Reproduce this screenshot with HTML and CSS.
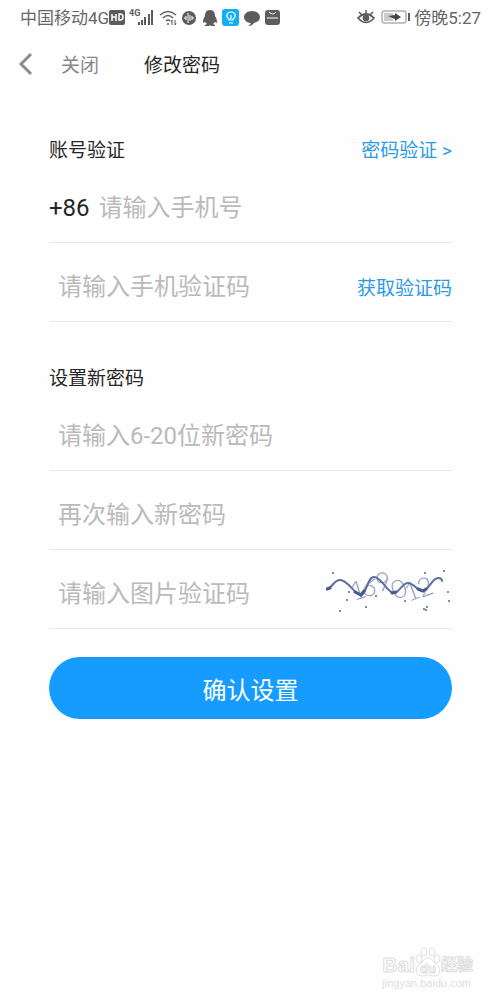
FILE: index.html
```html
<!DOCTYPE html>
<html lang="zh-CN">
<head>
  <meta charset="UTF-8">
  <meta name="viewport" content="width=device-width, initial-scale=1.0">
  <title>修改密码</title>
  <link rel="stylesheet" href="styles.css">
</head>
<body>
  <div class="status-bar">
    <div class="status-left">
      <span>中国移动4G</span>
      <svg width="174" height="22" viewBox="2 0 174 22" fill="#5c5c5c" aria-hidden="true">
        <!-- HD -->
        <rect x="2" y="4" width="16" height="15" rx="2"/>
        <path d="M5 8v7M9 8v7M5 11h4M12 8v6h1q3 0 3-3t-3-3z" fill="none" stroke="#fff" stroke-width="1.5"/>
        <!-- signal -->
        <text class="net-type" x="22" y="10">4G</text>
        <path d="M31 16h2v3h-2zM34 14h2v5h-2zM37 11h2v8h-2zM41 8h2v11h-2zM44 4h2v15h-2z"/>
        <!-- wifi -->
        <g fill="none" stroke="#5c5c5c" stroke-width="1.5">
          <path d="M53 9q8-7 16 0M56 12q5-5 10 0M59 15q2-2 4 0"/>
          <path d="M65 19v-5l-1 2M68 14v5l1-2" stroke-width="1"/>
        </g>
        <circle cx="61" cy="18" r="1"/>
        <!-- voice -->
        <circle cx="82" cy="12" r="7"/>
        <path d="M77 12h2M87 12h-2M79 10v4M81 7v10M83 9v6M85 10v4" stroke="#fff"/>
        <!-- penguin -->
        <path d="M103 4c-4 0-5 3-5 6-2 3-2 5-2 7l2-1 2 2-2 1v1h4l1-1 1 1h4v-1l-2-1 2-2 2 1c0-2 0-4-2-7 0-3-1-6-5-6z"/>
        <!-- bulb app -->
        <rect x="115" y="3" width="17" height="17" rx="3" fill="#12aef5"/>
        <path d="M122 14v-1c-4-3-2-7 2-7s6 4 2 7v1zM122 17h4M124 13v-4" fill="none" stroke="#fff" stroke-width="1.2"/>
        <!-- chat -->
        <path d="M145 5c-5 0-8 3-8 6s3 6 7 6q-1 2-3 3 4 0 6-3c4-1 6-3 6-6s-3-6-8-6z"/>
        <!-- store -->
        <rect x="158" y="4" width="15" height="15" rx="3"/>
        <path d="M162 6q4 4 7 0M160 12h11" fill="none" stroke="#fff"/>
      </svg>
    </div>
    <div class="status-right">
      <svg width="54" height="22" viewBox="-1 0 54 22" fill="none" stroke="#5c5c5c" aria-hidden="true">
        <!-- eye comfort -->
        <path d="M1 12q8-8 16 0-8 9-16 0z" stroke-width="1.7"/>
        <path d="M2 6l3 3M9 4v3M16 6l-3 3" stroke-width="1.5"/>
        <circle cx="9" cy="12" r="3" fill="#5c5c5c"/>
        <!-- battery -->
        <rect x="25" y="5" width="24" height="12" rx="2" stroke="#888"/>
        <path d="M27 7h9v8h-9z" fill="#ccc" stroke="none"/>
        <path d="M31 10l7-1V7l6 4-6 4v-2z" fill="#444" stroke="none"/>
        <path d="M52 7v8" stroke-width="2"/>
      </svg>
      <span>傍晚5:27</span>
    </div>
  </div>

  <header class="nav">
    <a href="#" class="back" aria-label="返回">
      <svg width="14" height="24" viewBox="0 0 14 24" fill="none" stroke="#888b90" stroke-width="3">
        <path d="M12 2L2 12l10 10"/>
      </svg>
    </a>
    <a href="#" class="close">关闭</a>
    <h1>修改密码</h1>
  </header>

  <form class="form">
    <section>
      <div class="section-head">
        <h2>账号验证</h2>
        <a href="#" class="link">密码验证 &gt;</a>
      </div>
      <div class="row">
        <label class="prefix" for="phone">+86</label>
        <input type="tel" id="phone" placeholder="请输入手机号">
      </div>
      <div class="row">
        <input type="text" id="sms" placeholder="请输入手机验证码" aria-label="手机验证码">
        <button type="button" class="link">获取验证码</button>
      </div>
    </section>

    <section>
      <div class="section-head">
        <h2>设置新密码</h2>
      </div>
      <div class="row">
        <input type="password" id="password" placeholder="请输入6-20位新密码" aria-label="新密码">
      </div>
      <div class="row">
        <input type="password" id="confirm" placeholder="再次输入新密码" aria-label="再次输入新密码">
      </div>
      <div class="row">
        <input type="text" id="captcha" placeholder="请输入图片验证码" aria-label="图片验证码">
        <button type="button" class="captcha" aria-label="换一张">
          <svg width="126" height="60" viewBox="1 -3 126 60">
            <g class="captcha-digits">
              <text x="33" y="32" transform="rotate(-18 33 23)">1</text>
              <text x="45" y="29" transform="rotate(14 45 20)">6</text>
              <text x="58" y="24" transform="rotate(-12 58 15)">9</text>
              <text x="74" y="31" transform="rotate(-22 74 22)">0</text>
              <text x="87" y="33" transform="rotate(-20 87 24)">1</text>
              <text x="100" y="29" transform="rotate(-20 100 20)">2</text>
            </g>
            <path d="M2 22C7 21 9 13 15 13c8 0 14 14 21 15 6-1 6-18 13-18 8 0 13 16 20 16 5 0 8-10 14-10s10 9 15 8c6-1 9-13 15-13q4 0 4 3" fill="none" stroke="#5f6e9e" stroke-width="2" stroke-linecap="round"/>
            <path d="M2 22l3-1M30 25l6 3 3-4M67 26l4-1M93 22l5 2 3-2" fill="none" stroke="#4a5a90" stroke-width="3" stroke-linecap="round"/>
            <g fill="#53639a">
              <circle cx="8" cy="6" r="1"/>
              <circle cx="24" cy="25" r="1"/>
              <circle cx="22" cy="33" r="1"/>
              <circle cx="41" cy="40" r="1"/>
              <circle cx="15" cy="44" r="1"/>
              <circle cx="51" cy="29" r="1"/>
              <circle cx="80" cy="34" r="1"/>
              <circle cx="100" cy="6" r="1"/>
              <circle cx="119" cy="4" r="1"/>
              <circle cx="123" cy="25" r="1"/>
              <circle cx="124" cy="34" r="1"/>
              <circle cx="99" cy="42" r="1"/>
              <circle cx="102" cy="40" r="1"/>
              <circle cx="101" cy="43" r="1"/>
            </g>
          </svg>
        </button>
      </div>
    </section>

    <button type="submit" class="submit">确认设置</button>
  </form>

  <footer class="watermark">
    <div class="brand">
      <span>Bai</span>
      <svg width="26" height="30" viewBox="0 0 26 30" fill="#fff" stroke="#dedede" aria-hidden="true">
        <ellipse cx="4" cy="12" rx="3" ry="4"/>
        <ellipse cx="9" cy="5" rx="3" ry="4"/>
        <ellipse cx="17" cy="5" rx="3" ry="4"/>
        <ellipse cx="22" cy="12" rx="3" ry="4"/>
        <path d="M13 11c-4 0-5 4-8 6-6 4-4 12 2 12 3 0 4-1 6-1s3 1 6 1c6 0 8-8 2-12-3-2-4-6-8-6z"/>
        <text class="paw-text" x="13" y="26" text-anchor="middle">du</text>
      </svg>
      <span class="brand-cn">经验</span>
    </div>
    <div class="site">jingyan.baidu.com</div>
  </footer>
</body>
</html>
```

FILE: styles.css
```css
:root {
  --blue: #169cff;
  --link-color: #2b9be3;
  --text-color: #262626;
  --muted-color: #bababa;
  --line-color: #e8e8e8;
}

* {
  box-sizing: border-box;
}

body {
  margin: 0;
  min-height: 100vh;
  display: flex;
  flex-direction: column;
  background: #fefefe;
  color: var(--text-color);
  font-family: Roboto, "Noto Sans CJK SC", sans-serif;
  font-size: 19px;
}

a {
  text-decoration: none;
}

button {
  padding: 0;
  border: none;
  background: none;
  font-family: inherit;
  cursor: pointer;
}

svg {
  display: block;
  flex: none;
}

h1, h2 {
  margin: 0;
  font-size: 19px;
  font-weight: 400;
}

/* Status bar */
.status-bar {
  display: flex;
  justify-content: space-between;
  align-items: center;
  height: 33px;
  padding: 0 19px 0 20px;
  color: #666;
  font-size: 17px;
  white-space: nowrap;
}

.status-left,
.status-right {
  display: flex;
  align-items: center;
}

.status-right {
  gap: 4px;
}

.net-type {
  font-size: 9px;
  font-weight: 700;
}

/* Navigation */
.nav {
  display: flex;
  align-items: center;
  height: 61px;
  padding-left: 19px;
}

.close {
  margin: 0 45px 0 28px;
  color: #85878b;
}

/* Form */
.form {
  padding: 40px 48px 0 49px;
}

.section-head {
  display: flex;
  justify-content: space-between;
  align-items: center;
  height: 28px;
  margin-bottom: 2px;
}

section + section {
  margin-top: 40px;
}

.link {
  flex: none;
  color: var(--link-color);
  font-size: 19px;
}

.row {
  display: flex;
  align-items: center;
  height: 79px;
  padding-top: 9px;
  border-bottom: 1px solid var(--line-color);
}

.row input {
  flex: 1;
  min-width: 0;
  height: 48px;
  padding: 0 0 0 9px;
  border: none;
  outline: none;
  background: none;
  color: var(--text-color);
  font-family: inherit;
  font-size: 24px;
}

.row input::placeholder {
  color: var(--muted-color);
}

.prefix {
  font-size: 24px;
}

.captcha-digits {
  fill: #949fc0;
  font-family: Lato, sans-serif;
  font-size: 26px;
  font-weight: 300;
  text-anchor: middle;
}

.submit {
  display: block;
  width: 100%;
  height: 62px;
  margin-top: 28px;
  border-radius: 31px;
  background: var(--blue);
  color: #fff;
  font-size: 24px;
}

/* Watermark */
.watermark {
  align-self: flex-end;
  margin: auto 27px 11px 0;
  color: #fff;
  font-family: "Liberation Sans", "Noto Sans CJK SC", sans-serif;
  -webkit-text-stroke: 1px #dedede;
}

.brand {
  display: flex;
  align-items: flex-end;
  height: 31px;
  font-size: 21px;
  font-weight: 700;
  line-height: 24px;
}

.brand-cn {
  font-size: 16px;
}

.paw-text {
  font-size: 13px;
}

.site {
  color: #dedede;
  font-size: 11px;
  line-height: 12px;
  -webkit-text-stroke: 0;
}
```
